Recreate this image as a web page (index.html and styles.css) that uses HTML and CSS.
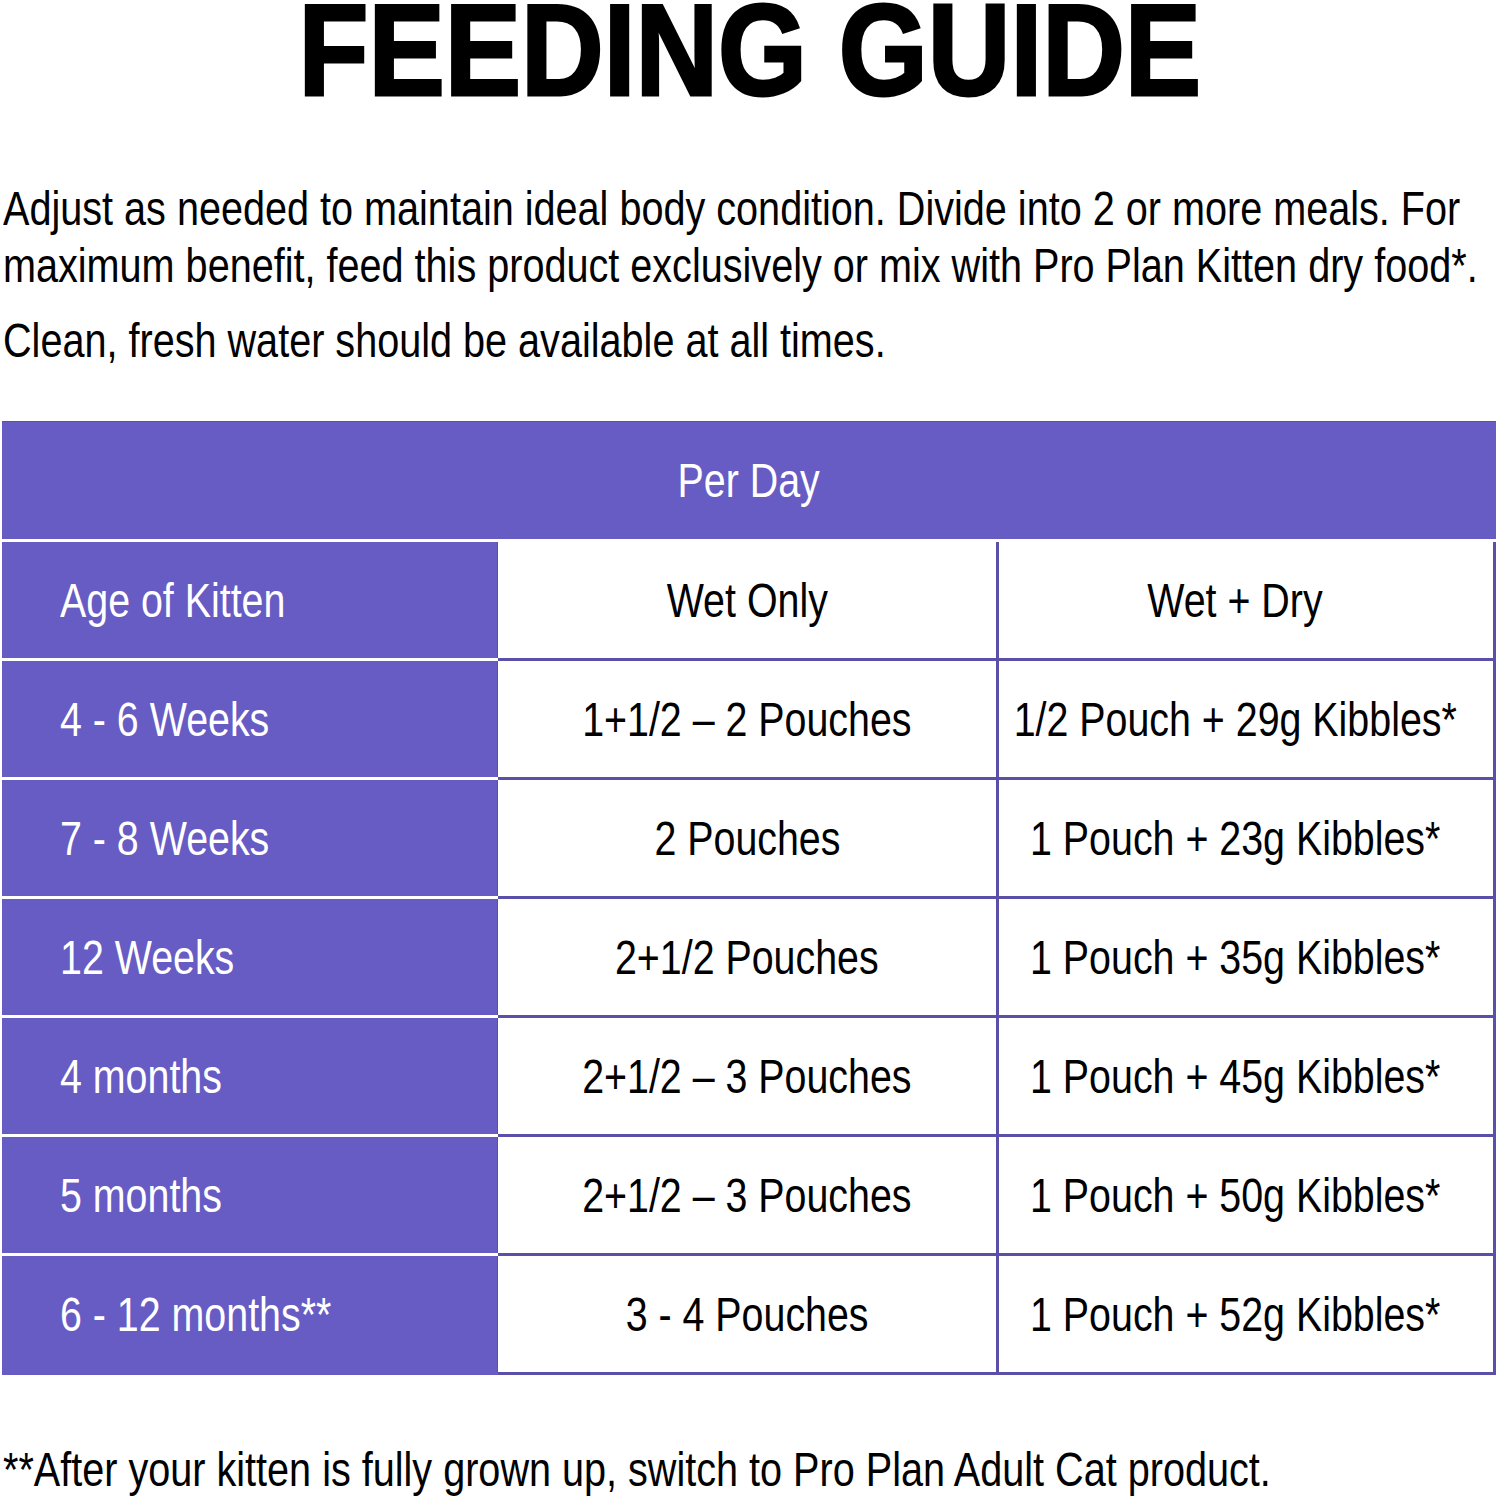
FILE: index.html
```html
<!DOCTYPE html>
<html lang="en">
<head>
<meta charset="utf-8">
<title>Feeding Guide</title>
<link rel="stylesheet" href="styles.css">
</head>
<body>
<main class="page">
  <h1 class="title"><span class="title-text">FEEDING GUIDE</span></h1>
  <p class="intro">
    <span class="line">Adjust as needed to maintain ideal body condition. Divide into 2 or more meals. For</span>
    <span class="line">maximum benefit, feed this product exclusively or mix with Pro Plan Kitten dry food*.</span>
  </p>
  <p class="intro intro-2"><span class="line">Clean, fresh water should be available at all times.</span></p>

  <section class="guide">
    <div class="guide-head"><span class="tx">Per Day</span></div>
    <div class="guide-gap"></div>
    <div class="row">
      <div class="cell age"><span class="tx">Age of Kitten</span></div>
      <div class="cell val"><span class="tx">Wet Only</span></div>
      <div class="cell val last"><span class="tx">Wet + Dry</span></div>
    </div>
    <div class="row">
      <div class="cell age"><span class="tx">4 - 6 Weeks</span></div>
      <div class="cell val"><span class="tx">1+1/2 – 2 Pouches</span></div>
      <div class="cell val last"><span class="tx">1/2 Pouch + 29g Kibbles*</span></div>
    </div>
    <div class="row">
      <div class="cell age"><span class="tx">7 - 8 Weeks</span></div>
      <div class="cell val"><span class="tx">2 Pouches</span></div>
      <div class="cell val last"><span class="tx">1 Pouch + 23g Kibbles*</span></div>
    </div>
    <div class="row">
      <div class="cell age"><span class="tx">12 Weeks</span></div>
      <div class="cell val"><span class="tx">2+1/2 Pouches</span></div>
      <div class="cell val last"><span class="tx">1 Pouch + 35g Kibbles*</span></div>
    </div>
    <div class="row">
      <div class="cell age"><span class="tx">4 months</span></div>
      <div class="cell val"><span class="tx">2+1/2 – 3 Pouches</span></div>
      <div class="cell val last"><span class="tx">1 Pouch + 45g Kibbles*</span></div>
    </div>
    <div class="row">
      <div class="cell age"><span class="tx">5 months</span></div>
      <div class="cell val"><span class="tx">2+1/2 – 3 Pouches</span></div>
      <div class="cell val last"><span class="tx">1 Pouch + 50g Kibbles*</span></div>
    </div>
    <div class="row row-last">
      <div class="cell age"><span class="tx">6 - 12 months**</span></div>
      <div class="cell val"><span class="tx">3 - 4 Pouches</span></div>
      <div class="cell val last"><span class="tx">1 Pouch + 52g Kibbles*</span></div>
    </div>
  </section>

  <p class="note"><span class="line">**After your kitten is fully grown up, switch to Pro Plan Adult Cat product.</span></p>
</main>
</body>
</html>
```

FILE: styles.css
```css
html, body {
  margin: 0;
  padding: 0;
  background: #ffffff;
}

body {
  font-family: "Liberation Sans", Arial, Helvetica, sans-serif;
  color: #000;
  width: 1499px;
  height: 1500px;
  overflow: hidden;
}

.page {
  display: flex;
  flex-direction: column;
}

/* Title */
.title {
  margin: 0;
  height: 100px;
  display: flex;
  justify-content: center;
  font-weight: 700;
  font-size: 130px;
  line-height: 100px;
}

.title-text {
  display: inline-block;
  white-space: nowrap;
  transform: scaleX(0.88);
  -webkit-text-stroke: 3px #000;
}

/* Condensed text lines */
.line {
  display: block;
  white-space: nowrap;
  transform: scaleX(0.825);
  transform-origin: left center;
}

.intro {
  margin: 80px 0 0 3px;
  font-size: 48px;
  line-height: 57px;
}

.intro-2 {
  margin-top: 18px;
}

/* Table */
.guide {
  margin: 52px 0 0 2px;
  width: 1494px;
  display: flex;
  flex-direction: column;
}

.guide-head {
  height: 118px;
  background: #675bc4;
  border-top: 1px solid #5a50a8;
  box-sizing: border-box;
  color: #fff;
  display: flex;
  align-items: center;
  justify-content: center;
}

.guide-gap {
  height: 3px;
  background: #fff;
}

.row {
  display: grid;
  grid-template-columns: 496px 501px 497px;
  height: 119px;
}

.cell {
  display: flex;
  align-items: center;
  box-sizing: border-box;
  min-width: 0;
}

.tx {
  display: inline-block;
  flex: none;
  white-space: nowrap;
  font-size: 48px;
  line-height: 57px;
  transform: scaleX(0.82);
  transform-origin: center center;
}

.age {
  background: #675bc4;
  color: #fff;
  padding-left: 58px;
  border-bottom: 3px solid #fff;
  box-shadow: inset -1px 0 0 #5a50a8;
}

.age .tx {
  transform-origin: left center;
}

.val {
  justify-content: center;
  border-bottom: 3px solid #5a50a8;
  border-right: 3px solid #5a50a8;
  color: #000;
}

.val.last {
  padding-right: 22px;
}

.row-last .age {
  border-bottom-color: #675bc4;
}

.note {
  margin: 66px 0 0 3px;
  font-size: 48px;
  line-height: 57px;
}
```
